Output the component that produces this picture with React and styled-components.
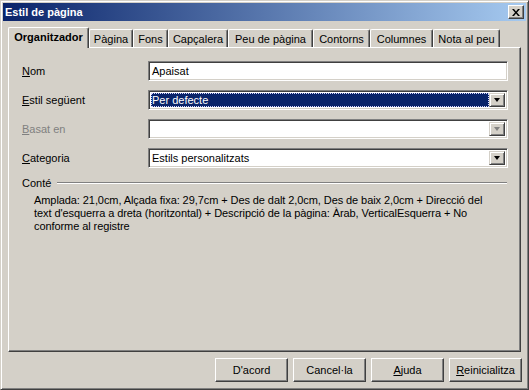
import React from 'react'
import styled, { createGlobalStyle } from 'styled-components'

const GlobalStyle = createGlobalStyle`
  html, body {
    margin: 0;
    padding: 0;
    background: #d4d0c8;
  }
  body {
    font-family: Tahoma, 'Liberation Sans', Arial, sans-serif;
    font-size: 11px;
    color: #000;
  }
`

const Window = styled.div`
  box-sizing: border-box;
  width: 529px;
  height: 390px;
  display: flex;
  flex-direction: column;
  background: #d4d0c8;
  border-top: 1px solid #d4d0c8;
  border-left: 1px solid #d4d0c8;
  border-right: 1px solid #404040;
  border-bottom: 1px solid #404040;
  box-shadow: inset 1px 1px 0 #fff, inset -1px -1px 0 #808080;
  padding: 2px;
`

const TitleBar = styled.div`
  height: 18px;
  flex: none;
  display: flex;
  align-items: center;
  justify-content: space-between;
  padding: 0 2px 0 2px;
  background: linear-gradient(to right, #0a246a, #a6caf0);
  color: #fff;
  font-weight: bold;
  font-size: 11px;
`

const CloseButton = styled.div`
  box-sizing: border-box;
  width: 16px;
  height: 14px;
  display: flex;
  align-items: center;
  justify-content: center;
  background: #d4d0c8;
  border-top: 1px solid #fff;
  border-left: 1px solid #fff;
  border-right: 1px solid #404040;
  border-bottom: 1px solid #404040;
  box-shadow: inset -1px -1px 0 #808080;
`

const TabStrip = styled.div`
  display: flex;
  align-items: flex-end;
  height: 20px;
  margin: 6px 5px 0 5px;
  position: relative;
  z-index: 1;
`

const Tab = styled.div`
  box-sizing: border-box;
  width: ${p => p.w}px;
  height: ${p => (p.active ? 21 : 18)}px;
  margin-bottom: ${p => (p.active ? -1 : 0)}px;
  display: flex;
  align-items: center;
  justify-content: center;
  padding-bottom: ${p => (p.active ? 2 : 0)}px;
  font-weight: ${p => (p.active ? 'bold' : 'normal')};
  background: #d4d0c8;
  border-left: 1px solid #fff;
  border-top: 1px solid #fff;
  border-right: 1px solid #404040;
  border-top-left-radius: 2px;
  border-top-right-radius: 2px;
  box-shadow: inset -1px 0 0 #808080;
  white-space: nowrap;
`

const Panel = styled.div`
  box-sizing: border-box;
  flex: 1;
  margin: 0 5px;
  border-top: 1px solid #fff;
  border-left: 1px solid #fff;
  border-right: 1px solid #404040;
  border-bottom: 1px solid #404040;
  box-shadow: inset -1px -1px 0 #808080;
  padding: 13px 12px 0 13px;
`

const FormGrid = styled.div`
  display: grid;
  grid-template-columns: 126px 360px;
  grid-auto-rows: 20px;
  row-gap: 9px;
  align-items: center;
`

const Label = styled.div`
  color: ${p => (p.disabled ? '#808080' : '#000')};
  u {
    text-decoration: underline;
  }
`

const Field = styled.div`
  box-sizing: border-box;
  height: 20px;
  display: flex;
  align-items: stretch;
  background: #fff;
  border-top: 1px solid #808080;
  border-left: 1px solid #808080;
  border-right: 1px solid #fff;
  border-bottom: 1px solid #fff;
  box-shadow: inset 1px 1px 0 #404040, inset -1px -1px 0 #d4d0c8;
  padding: 2px;
`

const FieldText = styled.div`
  flex: 1;
  display: flex;
  align-items: center;
  padding-left: 1px;
  white-space: nowrap;
  overflow: hidden;
  ${p =>
    p.selected &&
    `
    background: #0a246a;
    color: #fff;
    outline: 1px dotted #d8d8ff;
    outline-offset: -1px;
  `}
`

const DropButton = styled.div`
  box-sizing: border-box;
  width: 16px;
  flex: none;
  display: flex;
  align-items: center;
  justify-content: center;
  background: #d4d0c8;
  border-top: 1px solid #d4d0c8;
  border-left: 1px solid #d4d0c8;
  border-right: 1px solid #404040;
  border-bottom: 1px solid #404040;
  box-shadow: inset 1px 1px 0 #fff, inset -1px -1px 0 #808080;
`

const Arrow = styled.div`
  width: 0;
  height: 0;
  border-left: 3.5px solid transparent;
  border-right: 3.5px solid transparent;
  border-top: 4px solid ${p => (p.disabled ? '#808080' : '#000')};
`

const GroupHeader = styled.div`
  display: flex;
  align-items: center;
  margin-top: 8px;
  margin-right: 1px;
  height: 13px;
`

const GroupLine = styled.div`
  flex: 1;
  height: 0;
  margin-left: 6px;
  border-top: 1px solid #808080;
  border-bottom: 1px solid #fff;
`

const Description = styled.div`
  margin: 5px 10px 0 12px;
  line-height: 13px;
  letter-spacing: -0.08px;
`

const ButtonRow = styled.div`
  display: flex;
  justify-content: flex-end;
  gap: 5px;
  padding: 6px 4px 5px 0;
`

const Button = styled.div`
  box-sizing: border-box;
  width: 73px;
  height: 24px;
  display: flex;
  align-items: center;
  justify-content: center;
  background: #d4d0c8;
  border-top: 1px solid #fff;
  border-left: 1px solid #fff;
  border-right: 1px solid #404040;
  border-bottom: 1px solid #404040;
  box-shadow: inset -1px -1px 0 #808080;
`

const tabs = [
  ['Organitzador', 81],
  ['Pàgina', 44],
  ['Fons', 35],
  ['Capçalera', 60],
  ['Peu de pàgina', 85],
  ['Contorns', 57],
  ['Columnes', 63],
  ['Nota al peu', 67],
]

const Combo = ({ value, selected, disabled }) => (
  <Field>
    <FieldText selected={selected}>{value}</FieldText>
    <DropButton>
      <Arrow disabled={disabled} />
    </DropButton>
  </Field>
)

const App = () => {
  return (
    <>
      <GlobalStyle />
      <Window>
        <TitleBar>
          <span>Estil de pàgina</span>
          <CloseButton>
            <svg width='8' height='7' viewBox='0 0 8 7'>
              <path d='M0 0h2l2 2.5L6 0h2L5 3.5 8 7H6L4 4.5 2 7H0l3-3.5z' fill='#000' />
            </svg>
          </CloseButton>
        </TitleBar>

        <TabStrip>
          {tabs.map(([name, w], i) => (
            <Tab key={name} w={w} active={i === 0}>
              {name}
            </Tab>
          ))}
        </TabStrip>

        <Panel>
          <FormGrid>
            <Label>
              <u>N</u>om
            </Label>
            <Field>
              <FieldText>Apaisat</FieldText>
            </Field>

            <Label>
              <u>E</u>stil següent
            </Label>
            <Combo value='Per defecte' selected />

            <Label disabled>
              <u>B</u>asat en
            </Label>
            <Combo value='' disabled />

            <Label>
              <u>C</u>ategoria
            </Label>
            <Combo value='Estils personalitzats' />
          </FormGrid>

          <GroupHeader>
            <span>Conté</span>
            <GroupLine />
          </GroupHeader>
          <Description>
            Amplada: 21,0cm, Alçada fixa: 29,7cm + Des de dalt 2,0cm, Des de baix 2,0cm + Direcció del
            text d'esquerra a dreta (horitzontal) + Descripció de la pàgina: Àrab, VerticalEsquerra + No
            conforme al registre
          </Description>
        </Panel>

        <ButtonRow>
          <Button>D'acord</Button>
          <Button>Cancel·la</Button>
          <Button>
            <span>
              <u>A</u>juda
            </span>
          </Button>
          <Button>
            <span>
              <u>R</u>einicialitza
            </span>
          </Button>
        </ButtonRow>
      </Window>
    </>
  )
}

export default App
